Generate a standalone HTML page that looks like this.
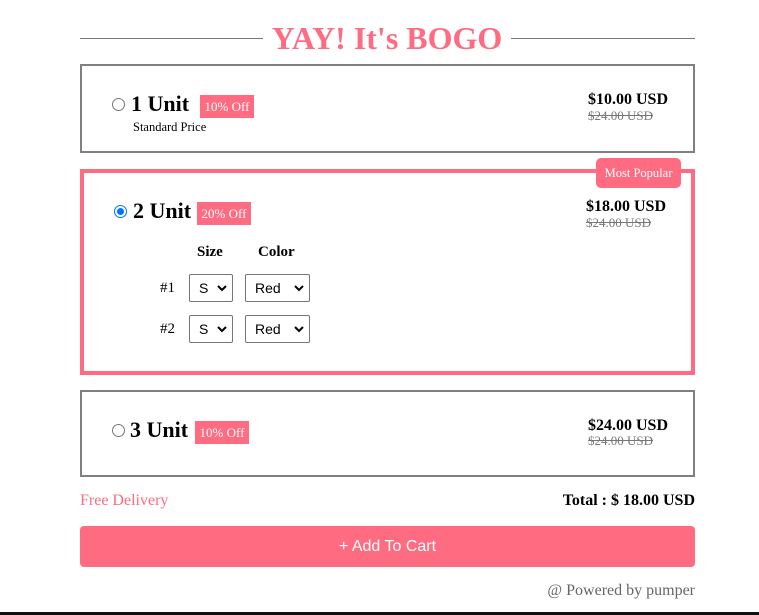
<!DOCTYPE html>
<html><head><style>
*{margin:0;padding:0;box-sizing:border-box}
body{width:759px;height:615px;background:#fff;font-family:"Liberation Serif",serif;position:relative;overflow:hidden;color:#000}
.a{position:absolute;white-space:nowrap}
.box{position:absolute;left:80px;width:615px}
.line{position:absolute;height:1px;background:#777;top:38px}
.radio{position:absolute;width:13px;height:13px;border-radius:50%;border:1px solid #767676;background:#fff}
.radio.on{border:1px solid #0075ff}
.radio.on::after{content:"";position:absolute;left:2px;top:2px;width:7px;height:7px;border-radius:50%;background:#0075ff}
.unit{position:absolute;font-size:22px;font-weight:bold;line-height:22px}
.badge{position:absolute;background:#ff6b81;color:#fff;font-size:13px;width:54px;height:23px;line-height:23px;text-align:center}
.p1{position:absolute;font-size:16px;font-weight:bold;line-height:16px}
.p2{position:absolute;font-size:13px;color:#777;text-decoration:line-through;line-height:14px}
.sel{position:absolute;height:28px;border:1px solid #767676;border-radius:2px;font-family:"Liberation Sans",sans-serif;font-size:14px;line-height:26px;padding-left:9px;background:#fff}
.sel svg{position:absolute;right:5px;top:10px}
</style></head><body>
<div class="line" style="left:80px;width:183px"></div>
<div class="line" style="left:511px;width:184px"></div>
<div class="a" style="left:263px;width:248px;text-align:center;top:20px;font-size:32px;font-weight:bold;color:#ff6b81;line-height:36px">YAY! It's BOGO</div>

<div class="box" style="top:64px;height:89px;border:2px solid #808080"></div>
<div class="radio" style="left:112px;top:98px"></div>
<div class="unit" style="left:131px;top:93px">1 Unit</div>
<div class="badge" style="left:200px;top:95px">10% Off</div>
<div class="a" style="left:133px;top:120px;font-size:12.5px">Standard Price</div>
<div class="p1" style="left:588px;top:92px">$10.00 USD</div>
<div class="p2" style="left:588px;top:109px">$24.00 USD</div>

<div class="box" style="top:169px;height:206px;border:4px solid #ff6b81"></div>
<div class="a" style="left:596px;top:158px;width:85px;height:30px;line-height:30px;text-align:center;background:#ff6b81;color:#fff;font-size:12.5px;border-radius:5px">Most Popular</div>
<div class="radio on" style="left:114px;top:205px"></div>
<div class="unit" style="left:133px;top:200px">2 Unit</div>
<div class="badge" style="left:197px;top:202px">20% Off</div>
<div class="p1" style="left:586px;top:199px">$18.00 USD</div>
<div class="p2" style="left:586px;top:216px">$24.00 USD</div>
<div class="a" style="left:197px;top:244px;font-size:15px;font-weight:bold">Size</div>
<div class="a" style="left:258px;top:244px;font-size:15px;font-weight:bold">Color</div>
<div class="a" style="left:160px;top:280px;font-size:15px">#1</div>
<div class="a" style="left:160px;top:321px;font-size:15px">#2</div>
<div class="sel" style="left:189px;top:274px;width:44px">S<svg width="10" height="7"><path d="M1 1l4 4 4-4" stroke="#000" stroke-width="2" fill="none"/></svg></div>
<div class="sel" style="left:245px;top:274px;width:65px">Red<svg width="10" height="7"><path d="M1 1l4 4 4-4" stroke="#000" stroke-width="2" fill="none"/></svg></div>
<div class="sel" style="left:189px;top:315px;width:44px">S<svg width="10" height="7"><path d="M1 1l4 4 4-4" stroke="#000" stroke-width="2" fill="none"/></svg></div>
<div class="sel" style="left:245px;top:315px;width:65px">Red<svg width="10" height="7"><path d="M1 1l4 4 4-4" stroke="#000" stroke-width="2" fill="none"/></svg></div>

<div class="box" style="top:390px;height:87px;border:2px solid #808080"></div>
<div class="radio" style="left:112px;top:424px"></div>
<div class="unit" style="left:130px;top:419px">3 Unit</div>
<div class="badge" style="left:195px;top:421px">10% Off</div>
<div class="p1" style="left:588px;top:418px">$24.00 USD</div>
<div class="p2" style="left:588px;top:434px">$24.00 USD</div>

<div class="a" style="left:80px;top:492px;font-size:16px;color:#ff6b81">Free Delivery</div>
<div class="a" style="right:64px;top:492px;font-size:16px;font-weight:bold">Total : $ 18.00 USD</div>
<div class="a" style="left:80px;top:526px;width:615px;height:41px;border-radius:4px;background:#ff6b81;color:#fff;font-family:'Liberation Sans',sans-serif;font-size:16px;line-height:41px;text-align:center">+ Add To Cart</div>
<div class="a" style="right:64px;top:582px;font-size:16px;color:#666">@ Powered by pumper</div>
<div class="a" style="left:0;top:612px;width:759px;height:3px;background:#111"></div>
</body></html>
